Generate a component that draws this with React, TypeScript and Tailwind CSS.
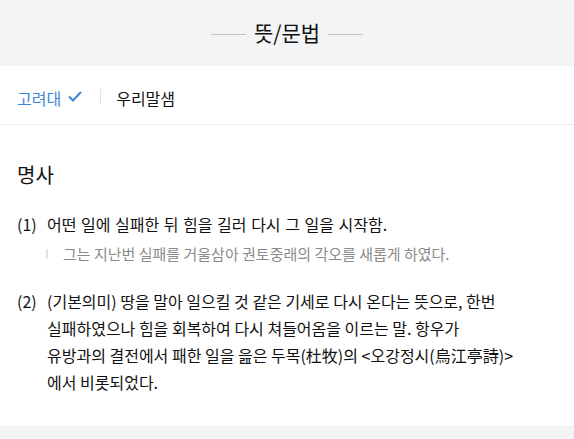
import React from "react";

const font = {
  fontFamily: '"Noto Sans CJK KR", "Noto Sans", sans-serif',
};

function CheckIcon() {
  return (
    <svg width="14" height="11" viewBox="0 0 14 11" fill="none">
      <path d="M1 5.5 L5 9.5 L13 1" stroke="#3a86d9" strokeWidth="2" />
    </svg>
  );
}

function App() {
  return (
    <div className="w-[574px] h-[439px] bg-white flex flex-col text-[#111]" style={font}>
      <div className="h-[66px] bg-[#f3f4f6] flex justify-center items-start pt-[18px] gap-2">
        <div className="w-[35px] h-px bg-[#c4c4c4] mt-[16px]" />
        <div className="text-[21px] leading-[28px] text-[#111]">뜻/문법</div>
        <div className="w-[35px] h-px bg-[#c4c4c4] mt-[16px]" />
      </div>

      <div className="h-[59px] border-b border-[#ececec] flex items-center pl-[17px] pt-[5px]">
        <span className="text-[16px] text-[#3a86d9] leading-none">고려대</span>
        <span className="ml-[7px] mb-[3px]">
          <CheckIcon />
        </span>
        <div className="w-px h-[15px] bg-[#e2e2e2] ml-[18px] mb-[2px]" />
        <span className="text-[16px] leading-none ml-[15px]">우리말샘</span>
      </div>

      <div className="flex-1 flex flex-col pl-[17px] pt-[36px]">
        <div className="text-[20px] leading-[28px]">명사</div>

        <div className="flex mt-[22px] text-[16px] leading-[27px] [word-spacing:1px]">
          <span className="w-[30px] shrink-0">(1)</span>
          <span>어떤 일에 실패한 뒤 힘을 길러 다시 그 일을 시작함.</span>
        </div>
        <div className="flex items-center ml-[29px] mt-[6px]">
          <div className="w-[2px] h-[10px] bg-[#e4e4e4]" />
          <span className="ml-[15px] text-[15px] leading-[20px] text-[#8a8a8a]">
            그는 지난번 실패를 거울삼아 권토중래의 각오를 새롭게 하였다.
          </span>
        </div>

        <div className="flex mt-[24px] text-[16px] leading-[27px]">
          <span className="w-[30px] shrink-0">(2)</span>
          <div className="flex flex-col whitespace-nowrap">
            <span>(기본의미) 땅을 말아 일으킬 것 같은 기세로 다시 온다는 뜻으로, 한번</span>
            <span>실패하였으나 힘을 회복하여 다시 쳐들어옴을 이르는 말. 항우가</span>
            <span>유방과의 결전에서 패한 일을 읊은 두목(杜牧)의 &lt;오강정시(烏江亭詩)&gt;</span>
            <span>에서 비롯되었다.</span>
          </div>
        </div>
      </div>

      <div className="h-[13px] bg-[#f3f4f6] border-t border-[#ececec]" />
    </div>
  );
}

export default App;
